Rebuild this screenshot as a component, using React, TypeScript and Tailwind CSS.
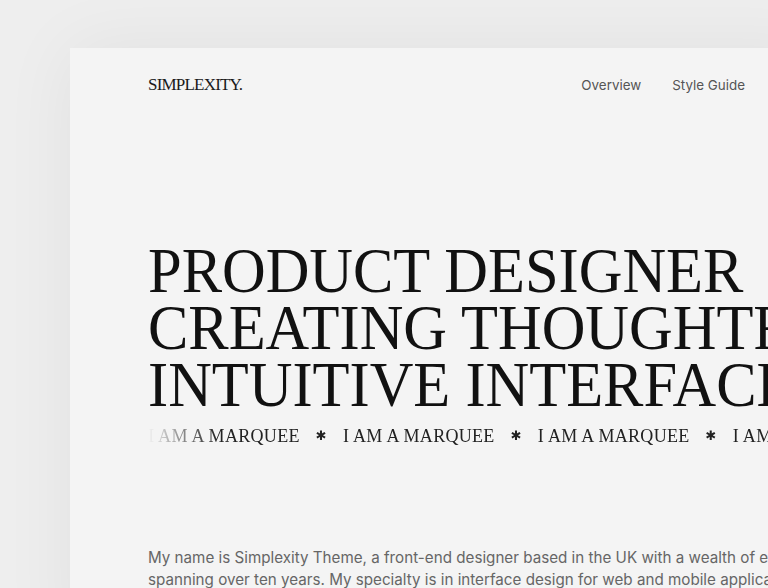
const serif = { fontFamily: '"Liberation Serif", "Times New Roman", serif' }

export default function App() {
  const items = Array.from({ length: 5 })

  return (
    <div className="h-screen w-screen overflow-hidden bg-[#eeeeee] pl-[70px] pt-[48px] font-['Inter',sans-serif]">
      <div className="w-[753px] min-h-[600px] bg-[#f4f4f4] px-[78px] shadow-[0_0_70px_rgba(0,0,0,0.06)]">
        <header className="flex h-[74px] items-center justify-between">
          <span className="text-[17px] tracking-[-0.8px] text-[#1a1a1a]" style={serif}>
            SIMPLEXITY.
          </span>
          <nav className="flex items-center gap-[31px] text-[13.4px] text-[#555]">
            <a>Overview</a>
            <a>Style Guide</a>
          </nav>
        </header>

        <h1
          className="mt-[120px] origin-left scale-x-[0.945] whitespace-nowrap text-[64px] font-normal leading-[57px] text-[#111]"
          style={serif}
        >
          <span className="block">PRODUCT DESIGNER</span>
          <span className="block">CREATING THOUGHTFUL,</span>
          <span className="block">INTUITIVE INTERFACES.</span>
        </h1>

        <div className="mt-[11px] w-[720px] overflow-hidden whitespace-nowrap [mask-image:linear-gradient(to_right,transparent,black_70px)]">
          <div className="flex items-center gap-[16px] text-[18px] leading-[24px] tracking-[0.3px] text-[#222]" style={serif}>
            {items.map((_, i) => (
              <div key={i} className="flex shrink-0 items-center gap-[16px]">
                <span>I AM A MARQUEE</span>
                <span className="font-['DejaVu_Sans'] text-[13px]">✱</span>
              </div>
            ))}
          </div>
        </div>

        <p className="mt-[99px] whitespace-nowrap text-[15.2px] leading-[22px] text-[#666]">
          <span className="block">My name is Simplexity Theme, a front-end designer based in the UK with a wealth of experience</span>
          <span className="block">spanning over ten years. My specialty is in interface design for web and mobile applications.</span>
        </p>
      </div>
    </div>
  )
}
